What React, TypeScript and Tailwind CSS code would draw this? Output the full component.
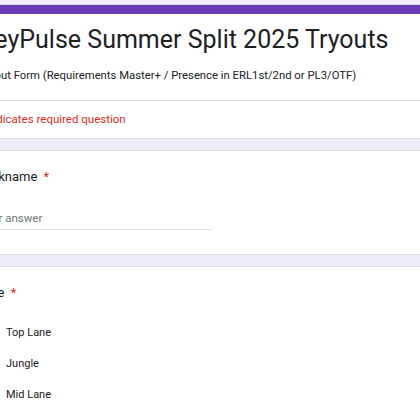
const roles = ["Top Lane", "Jungle", "Mid Lane", "Bot Lane", "Support"];

function Card({ children, className = "" }: { children: React.ReactNode; className?: string }) {
  return (
    <div className={`ml-[-40px] w-[640px] bg-white border border-[#dadce0] rounded-lg overflow-hidden ${className}`}>
      {children}
    </div>
  );
}

export default function App() {
  return (
    <div className="w-[420px] h-[420px] overflow-hidden bg-[#f0ebf8] pt-[4px] font-['Roboto',sans-serif] text-[#202124]">
      <div className="flex flex-col gap-[11px]">
        <Card>
          <div className="h-[9px] bg-[#673ab7]" />
          <div className="px-[18px] pt-[10px] pb-[16px]">
            <h1 className="text-[25px] leading-[32px]">KeyPulse Summer Split 2025 Tryouts</h1>
            <p className="mt-[12px] text-[11.3px] leading-[16px]">
              Tryout Form (Requirements Master+ / Presence in ERL1st/2nd or PL3/OTF)
            </p>
          </div>
          <div className="border-t border-[#dadce0] px-[18px] pt-[11px] pb-[12px]">
            <p className="text-[11.5px] leading-[14px] text-[#d93025]">* Indicates required question</p>
          </div>
        </Card>

        <Card className="h-[105px]">
          <div className="px-[18px] pt-[17px]">
            <p className="text-[13px] leading-[18px]">
              Nickname <span className="ml-[3px] text-[#d93025]">*</span>
            </p>
            <div className="mt-[24px] w-[232px] border-b border-[#e0e0e0] pb-[3px]">
              <span className="block text-[11.5px] leading-[16px] text-[#70757a]">Your answer</span>
            </div>
          </div>
        </Card>

        <Card>
          <div className="px-[18px] pt-[17px] pb-[20px]">
            <p className="text-[13px] leading-[18px]">
              Role <span className="ml-[3px] text-[#d93025]">*</span>
            </p>
            <div className="mt-[22px] flex flex-col gap-[14px]">
              {roles.map((r) => (
                <label key={r} className="flex items-center gap-[12px]">
                  <span className="w-[15px] h-[15px] rounded-full border-2 border-[#5f6368]" />
                  <span className="text-[11px] leading-[17px]">{r}</span>
                </label>
              ))}
            </div>
          </div>
        </Card>
      </div>
    </div>
  );
}
